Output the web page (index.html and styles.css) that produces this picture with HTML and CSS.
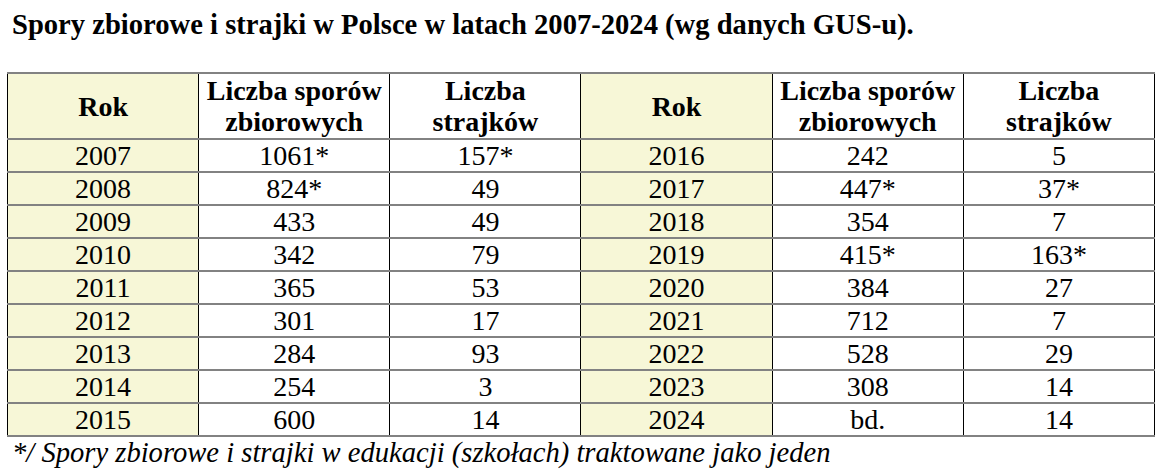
FILE: index.html
```html
<!DOCTYPE html>
<html lang="pl">
<head>
<meta charset="utf-8">
<title>Spory zbiorowe i strajki</title>
<link rel="stylesheet" href="styles.css">
</head>
<body>
<h1 class="title">Spory zbiorowe i strajki w Polsce w latach 2007-2024 (wg danych GUS-u).</h1>
<table class="data">
  <colgroup>
    <col class="c"><col class="c"><col class="c"><col class="c"><col class="c"><col class="c">
  </colgroup>
  <thead>
    <tr class="head">
      <th class="yr">Rok</th>
      <th>Liczba sporów<br>zbiorowych</th>
      <th>Liczba<br>strajków</th>
      <th class="yr">Rok</th>
      <th>Liczba sporów<br>zbiorowych</th>
      <th>Liczba<br>strajków</th>
    </tr>
  </thead>
  <tbody>
    <tr><td class="yr">2007</td><td>1061*</td><td>157*</td><td class="yr">2016</td><td>242</td><td>5</td></tr>
    <tr><td class="yr">2008</td><td>824*</td><td>49</td><td class="yr">2017</td><td>447*</td><td>37*</td></tr>
    <tr><td class="yr">2009</td><td>433</td><td>49</td><td class="yr">2018</td><td>354</td><td>7</td></tr>
    <tr><td class="yr">2010</td><td>342</td><td>79</td><td class="yr">2019</td><td>415*</td><td>163*</td></tr>
    <tr><td class="yr">2011</td><td>365</td><td>53</td><td class="yr">2020</td><td>384</td><td>27</td></tr>
    <tr><td class="yr">2012</td><td>301</td><td>17</td><td class="yr">2021</td><td>712</td><td>7</td></tr>
    <tr><td class="yr">2013</td><td>284</td><td>93</td><td class="yr">2022</td><td>528</td><td>29</td></tr>
    <tr><td class="yr">2014</td><td>254</td><td>3</td><td class="yr">2023</td><td>308</td><td>14</td></tr>
    <tr><td class="yr">2015</td><td>600</td><td>14</td><td class="yr">2024</td><td>bd.</td><td>14</td></tr>
  </tbody>
</table>
<p class="note">*/ Spory zbiorowe i strajki w edukacji (szkołach) traktowane jako jeden</p>
</body>
</html>
```
FILE: styles.css
```css
html, body {
  margin: 0;
  padding: 0;
  background: #fff;
}
body {
  padding: 0 0 0 7px;
  font-family: "Liberation Serif", "Times New Roman", serif;
  color: #000;
}
.title {
  margin: 0;
  padding: 9px 0 0 5px;
  height: 72px;
  box-sizing: border-box;
  font-family: "Liberation Serif", "Times New Roman", serif;
  font-size: 28.6px;
  font-weight: bold;
  line-height: 32px;
}
.data {
  border-collapse: collapse;
  table-layout: fixed;
  width: 1148px;
  font-family: "Liberation Serif", "Times New Roman", serif;
}
.data col.c {
  width: 191px;
}
.data th, .data td {
  font-family: "Liberation Serif", "Times New Roman", serif;
  border-left: 1px solid #000;
  border-right: 1px solid #000;
  border-top: 2px solid #828282;
  border-bottom: 2px solid #828282;
  text-align: center;
  padding: 0;
  font-size: 28px;
  color: #000;
}
.data th {
  font-weight: bold;
  line-height: 31px;
  height: 64px;
}
.data td {
  line-height: 31px;
  height: 31px;
}
.data .yr {
  background: #f7f7d7;
}
.note {
  margin: 0;
  padding: 0 0 0 5px;
  font-family: "Liberation Serif", "Times New Roman", serif;
  font-style: italic;
  font-size: 28.6px;
  line-height: 32px;
}
```
